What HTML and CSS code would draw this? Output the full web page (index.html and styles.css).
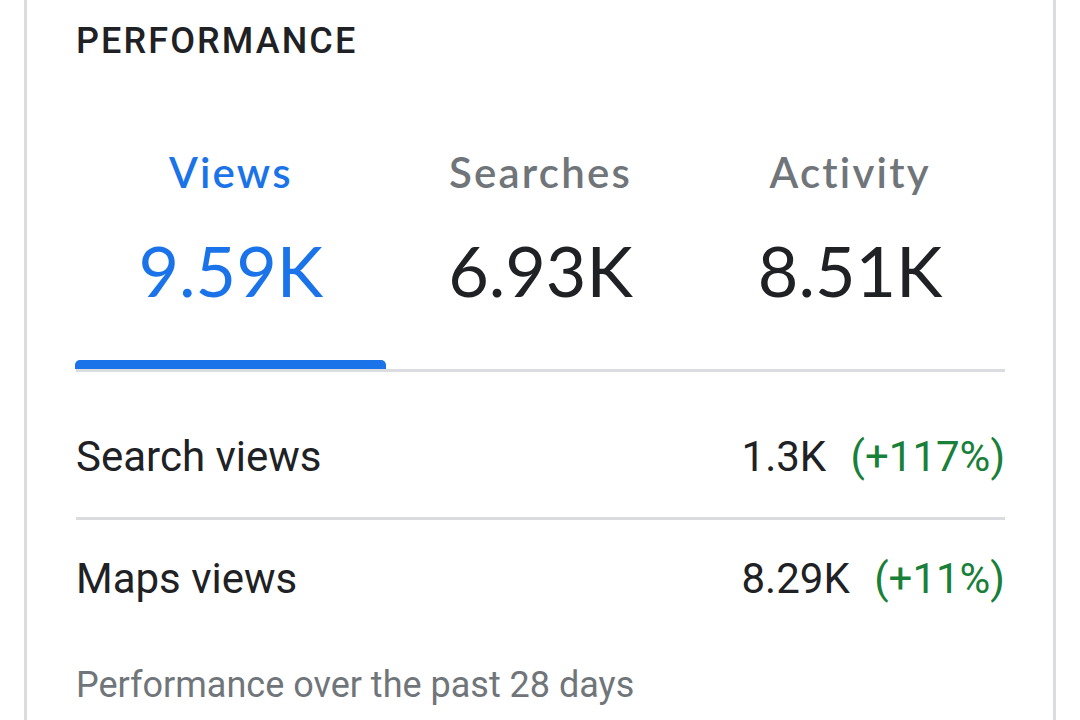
FILE: index.html
```html
<!DOCTYPE html>
<html lang="en">
<head>
<meta charset="utf-8">
<title>Performance</title>
<link rel="stylesheet" href="styles.css">
</head>
<body>
<div class="page">
  <section class="card">
    <h2 class="card-title">PERFORMANCE</h2>
    <div class="tabs">
      <div class="tab active">
        <div class="tab-label">Views</div>
        <div class="tab-value">9.59K</div>
        <div class="tab-indicator"></div>
      </div>
      <div class="tab">
        <div class="tab-label">Searches</div>
        <div class="tab-value">6.93K</div>
      </div>
      <div class="tab">
        <div class="tab-label">Activity</div>
        <div class="tab-value">8.51K</div>
      </div>
    </div>
    <div class="rows">
      <div class="row">
        <span class="row-label">Search views</span>
        <span class="row-value">1.3K <span class="change">(+117%)</span></span>
      </div>
      <div class="row">
        <span class="row-label">Maps views</span>
        <span class="row-value">8.29K <span class="change">(+11%)</span></span>
      </div>
    </div>
    <p class="footnote">Performance over the past 28 days</p>
  </section>
</div>
</body>
</html>
```

FILE: styles.css
```css
html, body {
  margin: 0;
  padding: 0;
  background: #ffffff;
}

body {
  font-family: Roboto, "Liberation Sans", Arial, sans-serif;
  color: #202124;
  height: 720px;
  overflow: hidden;
}

.page {
  padding: 0 24px;
}

.card {
  border-left: 3px solid #dadce0;
  border-right: 3px solid #dadce0;
  padding: 0 48px 0 49px;
  min-height: 720px;
  box-sizing: border-box;
}

.card-title {
  margin: 0;
  padding-top: 19px;
  font-size: 36px;
  line-height: 44px;
  font-weight: 500;
  letter-spacing: 2.1px;
  color: #202124;
}

.tabs {
  display: grid;
  grid-template-columns: 1fr 1fr 1fr;
  border-bottom: 3px solid #dadce0;
  margin-top: 84px;
}

.tab {
  position: relative;
  text-align: center;
  padding-bottom: 59px;
  font-family: Lato, "Open Sans", sans-serif;
}

.tab-label {
  font-size: 42px;
  line-height: 50px;
  font-weight: 600;
  letter-spacing: 2.2px;
  color: #70757a;
}

.tab-value {
  margin-top: 33px;
  font-size: 70px;
  line-height: 80px;
  font-weight: 400;
  color: #202124;
}

.tab.active .tab-label,
.tab.active .tab-value {
  color: #1a73e8;
}

.tab-indicator {
  position: absolute;
  left: -1px;
  right: 0;
  bottom: 0;
  height: 9px;
  background: #1a73e8;
  border-radius: 5px 5px 0 0;
}

.rows {
  margin-top: 26px;
}

.row {
  display: flex;
  justify-content: space-between;
  align-items: baseline;
  padding: 35px 0 36px;
  font-size: 42px;
  line-height: 48px;
}

.row + .row {
  border-top: 3px solid #dadce0;
}

.row-value {
  color: #202124;
}

.change {
  color: #188038;
  margin-left: 14px;
}

.footnote {
  margin: 26px 0 0;
  font-size: 36px;
  line-height: 40px;
  color: #70757a;
}
```
